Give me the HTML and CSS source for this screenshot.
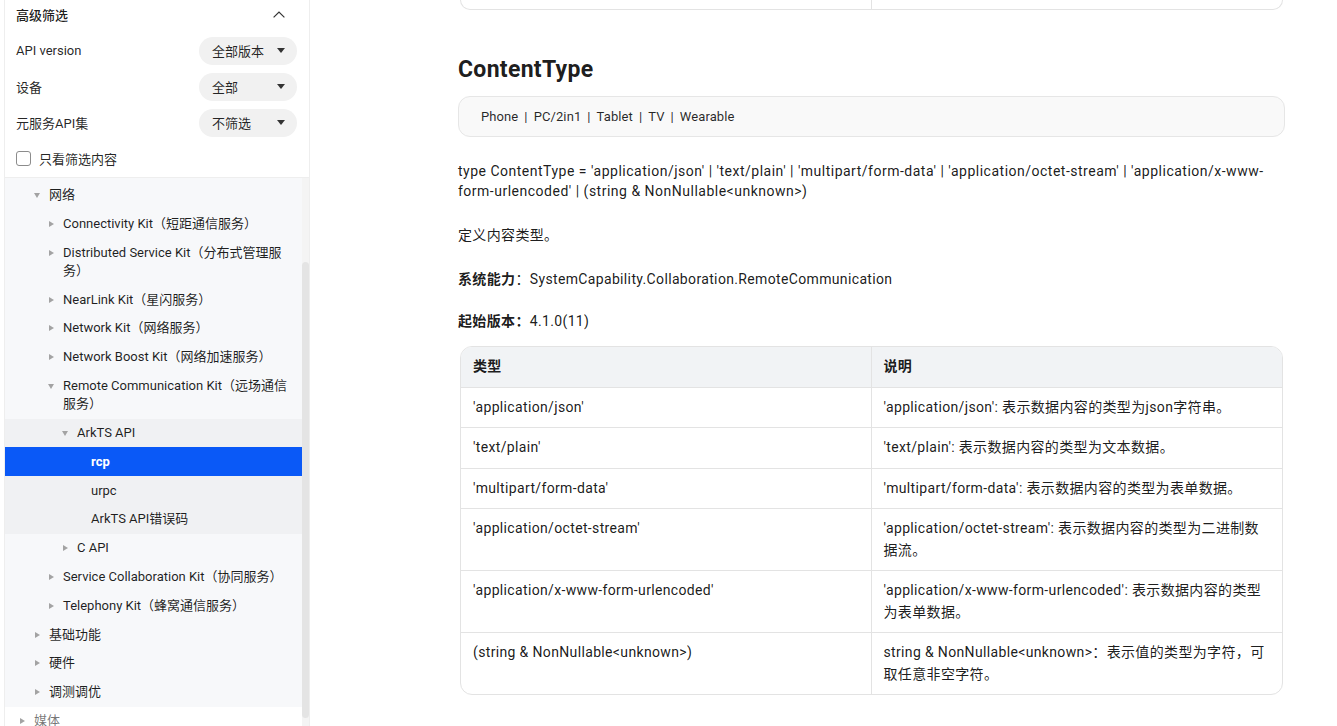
FILE: index.html
```html
<!DOCTYPE html>
<html lang="zh-CN">
<head>
    <meta charset="UTF-8">
    <meta name="viewport" content="width=device-width, initial-scale=1.0">
    <title>rcp - ContentType</title>
    <link rel="stylesheet" href="styles.css">
</head>
<body>
    <!-- Menú lateral: filtros + árbol de documentación -->
    <aside class="sidebar">
        <div class="filter">
            <div class="filter-head">
                <span>高级筛选</span>
                <svg class="chevron" width="12" height="7" viewBox="0 0 12 7">
                    <path d="M0.6 6.4 L6 1 L11.4 6.4" fill="none" stroke="#333" stroke-width="1.2"/>
                </svg>
            </div>
            <div class="filter-row">
                <span>API version</span>
                <div class="select">全部版本<i class="caret"></i></div>
            </div>
            <div class="filter-row">
                <span>设备</span>
                <div class="select">全部<i class="caret"></i></div>
            </div>
            <div class="filter-row">
                <span>元服务API集</span>
                <div class="select">不筛选<i class="caret"></i></div>
            </div>
            <label class="filter-row check">
                <span class="box"></span>只看筛选内容
            </label>
        </div>

        <div class="tree-wrap">
            <div class="tree">
                <div class="group">
                    <div class="row lv2"><span class="arrow"><i class="down"></i></span><span class="label">网络</span></div>
                    <div class="row lv3"><span class="arrow"><i class="right"></i></span><span class="label">Connectivity Kit（短距通信服务）</span></div>
                    <div class="row lv3"><span class="arrow"><i class="right"></i></span><span class="label">Distributed Service Kit（分布式管理服务）</span></div>
                    <div class="row lv3"><span class="arrow"><i class="right"></i></span><span class="label">NearLink Kit（星闪服务）</span></div>
                    <div class="row lv3"><span class="arrow"><i class="right"></i></span><span class="label">Network Kit（网络服务）</span></div>
                    <div class="row lv3"><span class="arrow"><i class="right"></i></span><span class="label">Network Boost Kit（网络加速服务）</span></div>
                    <div class="row lv3"><span class="arrow"><i class="down"></i></span><span class="label">Remote Communication Kit（远场通信服务）</span></div>

                    <div class="subgroup">
                        <div class="row lv4"><span class="arrow"><i class="down"></i></span><span class="label">ArkTS API</span></div>
                        <div class="row lv5 active"><span class="arrow"></span><span class="label">rcp</span></div>
                        <div class="row lv5"><span class="arrow"></span><span class="label">urpc</span></div>
                        <div class="row lv5"><span class="arrow"></span><span class="label">ArkTS API错误码</span></div>
                    </div>

                    <div class="row lv4"><span class="arrow"><i class="right"></i></span><span class="label">C API</span></div>
                    <div class="row lv3"><span class="arrow"><i class="right"></i></span><span class="label">Service Collaboration Kit（协同服务）</span></div>
                    <div class="row lv3"><span class="arrow"><i class="right"></i></span><span class="label">Telephony Kit（蜂窝通信服务）</span></div>
                    <div class="row lv2"><span class="arrow"><i class="right"></i></span><span class="label">基础功能</span></div>
                    <div class="row lv2"><span class="arrow"><i class="right"></i></span><span class="label">硬件</span></div>
                    <div class="row lv2"><span class="arrow"><i class="right"></i></span><span class="label">调测调优</span></div>
                </div>
                <div class="row lv1 faded"><span class="arrow"><i class="right"></i></span><span class="label">媒体</span></div>
            </div>
            <div class="scrollbar"><div class="thumb"></div></div>
        </div>
    </aside>

    <!-- Contenido de la referencia -->
    <main class="content">
        <div class="table-tail"><div></div><div></div></div>

        <h2>ContentType</h2>
        <div class="devices">Phone<span class="sep">|</span>PC/2in1<span class="sep">|</span>Tablet<span class="sep">|</span>TV<span class="sep">|</span>Wearable</div>

        <p class="p-type">type ContentType = 'application/json' | 'text/plain' | 'multipart/form-data' | 'application/octet-stream' | 'application/x-www-form-urlencoded' | (string &amp; NonNullable&lt;unknown&gt;)</p>
        <p class="p-desc">定义内容类型。</p>
        <p class="p-cap"><strong>系统能力</strong>：SystemCapability.Collaboration.RemoteCommunication</p>
        <p class="p-ver"><strong>起始版本：</strong>4.1.0(11)</p>

        <table class="doc-table">
            <thead>
                <tr><th>类型</th><th>说明</th></tr>
            </thead>
            <tbody>
                <tr><td>'application/json'</td><td>'application/json': 表示数据内容的类型为json字符串。</td></tr>
                <tr><td>'text/plain'</td><td>'text/plain': 表示数据内容的类型为文本数据。</td></tr>
                <tr><td>'multipart/form-data'</td><td>'multipart/form-data': 表示数据内容的类型为表单数据。</td></tr>
                <tr><td>'application/octet-stream'</td><td>'application/octet-stream': 表示数据内容的类型为二进制数据流。</td></tr>
                <tr><td>'application/x-www-form-urlencoded'</td><td>'application/x-www-form-urlencoded': 表示数据内容的类型为表单数据。</td></tr>
                <tr><td>(string &amp; NonNullable&lt;unknown&gt;)</td><td>string &amp; NonNullable&lt;unknown&gt;：表示值的类型为字符，可取任意非空字符。</td></tr>
            </tbody>
        </table>
    </main>
</body>
</html>
```

FILE: styles.css
```css
* {
    box-sizing: border-box;
}
body {
    margin: 0;
    font-family: Roboto, "Noto Sans CJK SC", sans-serif;
    color: rgba(0, 0, 0, 0.9);
    background-color: #fff;
    display: flex;
    height: 726px;
    overflow: hidden;
}

/* ---- menú lateral ---- */
.sidebar {
    width: 306px;
    flex-shrink: 0;
    margin-left: 4px;
    border-left: 1px solid #eeeeee;
    border-right: 1px solid #eeeeee;
    display: flex;
    flex-direction: column;
}
.filter {
    padding: 0 12px 0 11px;
    border-bottom: 1px solid #eeeeee;
    font-size: 13px;
    color: rgba(0, 0, 0, 0.86);
}
.filter-head {
    height: 29px;
    margin-bottom: 3.5px;
    display: flex;
    align-items: center;
    justify-content: space-between;
    font-weight: 500;
    color: rgba(0, 0, 0, 0.9);
}
.chevron {
    margin-right: 12px;
}
.filter-row {
    height: 36px;
    display: flex;
    align-items: center;
    justify-content: space-between;
}
.select {
    width: 98px;
    height: 28px;
    border-radius: 14px;
    background-color: #f1f1f1;
    padding: 0 12px 0 13px;
    display: flex;
    align-items: center;
    justify-content: space-between;
}
.caret {
    width: 0;
    height: 0;
    border-left: 4px solid transparent;
    border-right: 4px solid transparent;
    border-top: 5px solid #333;
}
.check {
    justify-content: flex-start;
    cursor: pointer;
}
.box {
    width: 15px;
    height: 15px;
    border: 1px solid #8c8c8c;
    border-radius: 3px;
    margin-right: 8px;
}

.tree-wrap {
    flex: 1;
    display: flex;
    overflow: hidden;
}
.tree {
    flex: 1;
}
.group {
    background-color: #f7f8fa;
    padding-top: 3.2px;
}
.subgroup {
    background-color: #f0f1f3;
}
.row {
    display: flex;
    align-items: flex-start;
    padding: 5.3px 12px 5.3px 0;
    font-size: 13px;
    line-height: 18.2px;
    color: rgba(0, 0, 0, 0.88);
}
.lv1 { padding-left: 15px; }
.lv2 { padding-left: 30px; }
.lv3 { padding-left: 44px; }
.lv4 { padding-left: 58px; }
.lv5 { padding-left: 72px; }
.arrow {
    width: 14px;
    height: 18.2px;
    flex-shrink: 0;
    display: flex;
    align-items: center;
}
.arrow .right {
    border-top: 3.5px solid transparent;
    border-bottom: 3.5px solid transparent;
    border-left: 5px solid #a3a3a3;
}
.arrow .down {
    margin-left: -1px;
    border-left: 3.5px solid transparent;
    border-right: 3.5px solid transparent;
    border-top: 5px solid #a3a3a3;
}
.label {
    flex: 1;
}
.row.active {
    background-color: #0a59f7;
    color: #fff;
    font-weight: 700;
}
.row.faded {
    color: rgba(0, 0, 0, 0.55);
}
.scrollbar {
    width: 7px;
    background-color: #f4f4f4;
    padding-top: 84px;
}
.thumb {
    height: 456px;
    border-radius: 4px;
    background-color: #e4e4e4;
}

/* ---- contenido ---- */
.content {
    padding-left: 148px;
    width: 975px;
    flex-shrink: 0;
    font-size: 14px;
    letter-spacing: 0.35px;
}
.table-tail {
    height: 10px;
    margin: 0 2px;
    border: 1px solid #e3e3e3;
    border-top: none;
    border-radius: 0 0 12px 12px;
    display: grid;
    grid-template-columns: 1fr 1fr;
}
.table-tail div:first-child {
    border-right: 1px solid #e3e3e3;
}
h2 {
    font-size: 23px;
    font-weight: 700;
    letter-spacing: 0.3px;
    line-height: 30px;
    margin: 45px 0 11px;
}
.devices {
    height: 41px;
    line-height: 39px;
    padding: 0 22px;
    font-size: 13px;
    letter-spacing: 0.1px;
    color: rgba(0, 0, 0, 0.85);
    background-color: #f9f9f9;
    border: 1px solid #e6e6e6;
    border-radius: 12px;
}
.sep {
    margin: 0 6px;
}
p {
    margin: 0;
    line-height: 20px;
}
.p-type {
    margin-top: 24px;
    letter-spacing: 0.5px;
}
.p-desc { margin-top: 24px; }
.p-cap { margin-top: 24px; }
.p-ver { margin-top: 22px; }
strong {
    font-weight: 700;
}
.doc-table {
    width: 823px;
    margin: 15px 2px 0;
    border-collapse: separate;
    border-spacing: 0;
    border: 1px solid #e3e3e3;
    border-radius: 12px;
    overflow: hidden;
    table-layout: fixed;
}
.doc-table th,
.doc-table td {
    width: 50%;
    text-align: left;
    vertical-align: top;
    padding: 9px 12px;
    line-height: 21.5px;
    border-bottom: 1px solid #e3e3e3;
}
.doc-table th:first-child,
.doc-table td:first-child {
    border-right: 1px solid #e3e3e3;
}
.doc-table tbody tr:last-child td {
    border-bottom: none;
}
.doc-table th {
    background-color: #f1f3f5;
    font-weight: 700;
}
```
